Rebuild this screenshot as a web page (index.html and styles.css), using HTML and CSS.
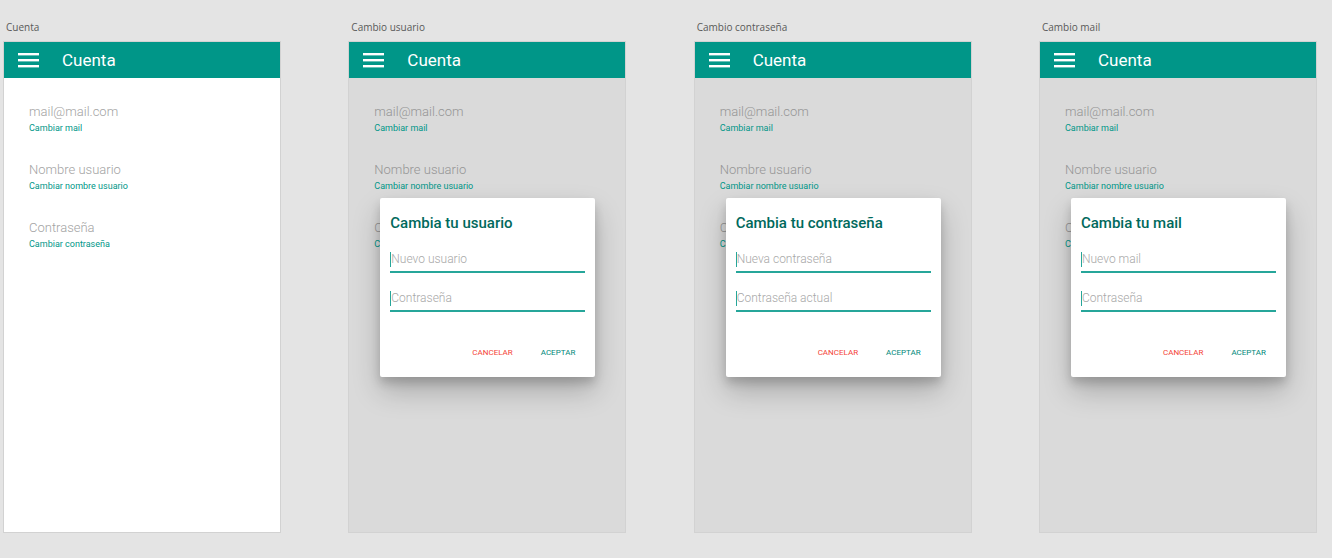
FILE: index.html
```html
<!DOCTYPE html>
<html lang="es">
<head>
<meta charset="utf-8">
<title>Cuenta</title>
<link rel="stylesheet" href="styles.css">
</head>
<body>
<div class="canvas">
  <section class="board">
    <div class="label">Cuenta</div>
    <div class="screen">
      <header class="appbar">
        <svg class="menu" width="21" height="15" viewBox="0 0 21 15"><rect x="0" y="0" width="21" height="2.4" fill="#fff"/><rect x="0" y="6" width="21" height="2.4" fill="#fff"/><rect x="0" y="12" width="21" height="2.4" fill="#fff"/></svg>
        <span class="title">Cuenta</span>
      </header>
      <div class="content">
        <div class="item"><div class="value">mail@mail.com</div><div class="action">Cambiar mail</div></div>
        <div class="item"><div class="value">Nombre usuario</div><div class="action">Cambiar nombre usuario</div></div>
        <div class="item"><div class="value">Contraseña</div><div class="action">Cambiar contraseña</div></div>
      </div>
    </div>
  </section>

  <section class="board">
    <div class="label">Cambio usuario</div>
    <div class="screen dim">
      <header class="appbar">
        <svg class="menu" width="21" height="15" viewBox="0 0 21 15"><rect x="0" y="0" width="21" height="2.4" fill="#fff"/><rect x="0" y="6" width="21" height="2.4" fill="#fff"/><rect x="0" y="12" width="21" height="2.4" fill="#fff"/></svg>
        <span class="title">Cuenta</span>
      </header>
      <div class="content">
        <div class="item"><div class="value">mail@mail.com</div><div class="action">Cambiar mail</div></div>
        <div class="item"><div class="value">Nombre usuario</div><div class="action">Cambiar nombre usuario</div></div>
        <div class="item"><div class="value">Contraseña</div><div class="action">Cambiar contraseña</div></div>
      </div>
      <div class="dialog">
        <h2 class="dtitle">Cambia tu usuario</h2>
        <div class="field first"><span class="caret"></span><span class="ph">Nuevo usuario</span></div>
        <div class="field second"><span class="caret"></span><span class="ph">Contraseña</span></div>
        <div class="buttons"><span class="btn cancel">CANCELAR</span><span class="btn ok">ACEPTAR</span></div>
      </div>
    </div>
  </section>

  <section class="board">
    <div class="label">Cambio contraseña</div>
    <div class="screen dim">
      <header class="appbar">
        <svg class="menu" width="21" height="15" viewBox="0 0 21 15"><rect x="0" y="0" width="21" height="2.4" fill="#fff"/><rect x="0" y="6" width="21" height="2.4" fill="#fff"/><rect x="0" y="12" width="21" height="2.4" fill="#fff"/></svg>
        <span class="title">Cuenta</span>
      </header>
      <div class="content">
        <div class="item"><div class="value">mail@mail.com</div><div class="action">Cambiar mail</div></div>
        <div class="item"><div class="value">Nombre usuario</div><div class="action">Cambiar nombre usuario</div></div>
        <div class="item"><div class="value">Contraseña</div><div class="action">Cambiar contraseña</div></div>
      </div>
      <div class="dialog">
        <h2 class="dtitle">Cambia tu contraseña</h2>
        <div class="field first"><span class="caret"></span><span class="ph">Nueva contraseña</span></div>
        <div class="field second"><span class="caret"></span><span class="ph">Contraseña actual</span></div>
        <div class="buttons"><span class="btn cancel">CANCELAR</span><span class="btn ok">ACEPTAR</span></div>
      </div>
    </div>
  </section>

  <section class="board">
    <div class="label">Cambio mail</div>
    <div class="screen dim">
      <header class="appbar">
        <svg class="menu" width="21" height="15" viewBox="0 0 21 15"><rect x="0" y="0" width="21" height="2.4" fill="#fff"/><rect x="0" y="6" width="21" height="2.4" fill="#fff"/><rect x="0" y="12" width="21" height="2.4" fill="#fff"/></svg>
        <span class="title">Cuenta</span>
      </header>
      <div class="content">
        <div class="item"><div class="value">mail@mail.com</div><div class="action">Cambiar mail</div></div>
        <div class="item"><div class="value">Nombre usuario</div><div class="action">Cambiar nombre usuario</div></div>
        <div class="item"><div class="value">Contraseña</div><div class="action">Cambiar contraseña</div></div>
      </div>
      <div class="dialog">
        <h2 class="dtitle">Cambia tu mail</h2>
        <div class="field first"><span class="caret"></span><span class="ph">Nuevo mail</span></div>
        <div class="field second"><span class="caret"></span><span class="ph">Contraseña</span></div>
        <div class="buttons"><span class="btn cancel">CANCELAR</span><span class="btn ok">ACEPTAR</span></div>
      </div>
    </div>
  </section>
</div>
</body>
</html>
```

FILE: styles.css
```css
* { box-sizing: border-box; }
html, body { margin: 0; padding: 0; }
body {
  background: #e4e4e4;
  width: 1332px;
  height: 558px;
  overflow: hidden;
  font-family: Roboto, "Liberation Sans", sans-serif;
}
.canvas {
  display: flex;
  gap: 67.33px;
  padding: 20px 0 0 3px;
}
.board {
  display: flex;
  flex-direction: column;
  width: 278px;
}
.label {
  font-family: "Open Sans", "Liberation Sans", sans-serif;
  font-size: 10px;
  color: #595959;
  height: 21px;
  line-height: 14px;
  padding-left: 3px;
}
.screen {
  position: relative;
  height: 492px;
  background: #fff;
  border: 1px solid #d2d2d2;
}
.screen.dim { background: #dadada; }
.appbar {
  height: 36px;
  background: #009688;
  display: flex;
  align-items: center;
  padding-left: 14px;
}
.menu { display: block; margin-top: 1px; }
.title {
  color: #fff;
  font-size: 17px;
  margin-left: 23px;
  line-height: 20px;
}
.content {
  display: flex;
  flex-direction: column;
  gap: 24px;
  padding: 25px 0 0 25px;
}
.item { height: 34px; }
.value {
  font-size: 13px;
  color: #a3a3a3;
  line-height: 17px;
  font-weight: 300;
}
.dim .value { color: #959595; }
.action {
  font-size: 9px;
  color: #009688;
  line-height: 16px;
}
.dialog {
  position: absolute;
  left: 31px;
  top: 156px;
  width: 215px;
  height: 179px;
  background: #fff;
  border-radius: 2px;
  box-shadow: 0 14px 28px rgba(0,0,0,0.22), 0 6px 10px rgba(0,0,0,0.16);
  padding: 15px 10px 0 10px;
  display: flex;
  flex-direction: column;
}
.dtitle {
  margin: 0;
  font-size: 15px;
  font-weight: 500;
  color: #00695c;
  line-height: 20px;
}
.field {
  display: flex;
  align-items: center;
  border-bottom: 2px solid #26a69a;
}
.field.first { height: 40px; padding-top: 14px; }
.field.second { height: 39px; padding-top: 13px; }
.caret {
  width: 1px;
  height: 15px;
  background: #26a69a;
}
.ph {
  font-size: 12px;
  color: #a8a8a8;
  font-weight: 300;
  line-height: 16px;
}
.buttons {
  display: flex;
  justify-content: flex-end;
  gap: 28px;
  padding-right: 10px;
  margin-top: 35px;
}
.btn {
  font-size: 8px;
  font-weight: 400;
  line-height: 12px;
}
.cancel { color: #f44336; }
.ok { color: #00897b; }
```
